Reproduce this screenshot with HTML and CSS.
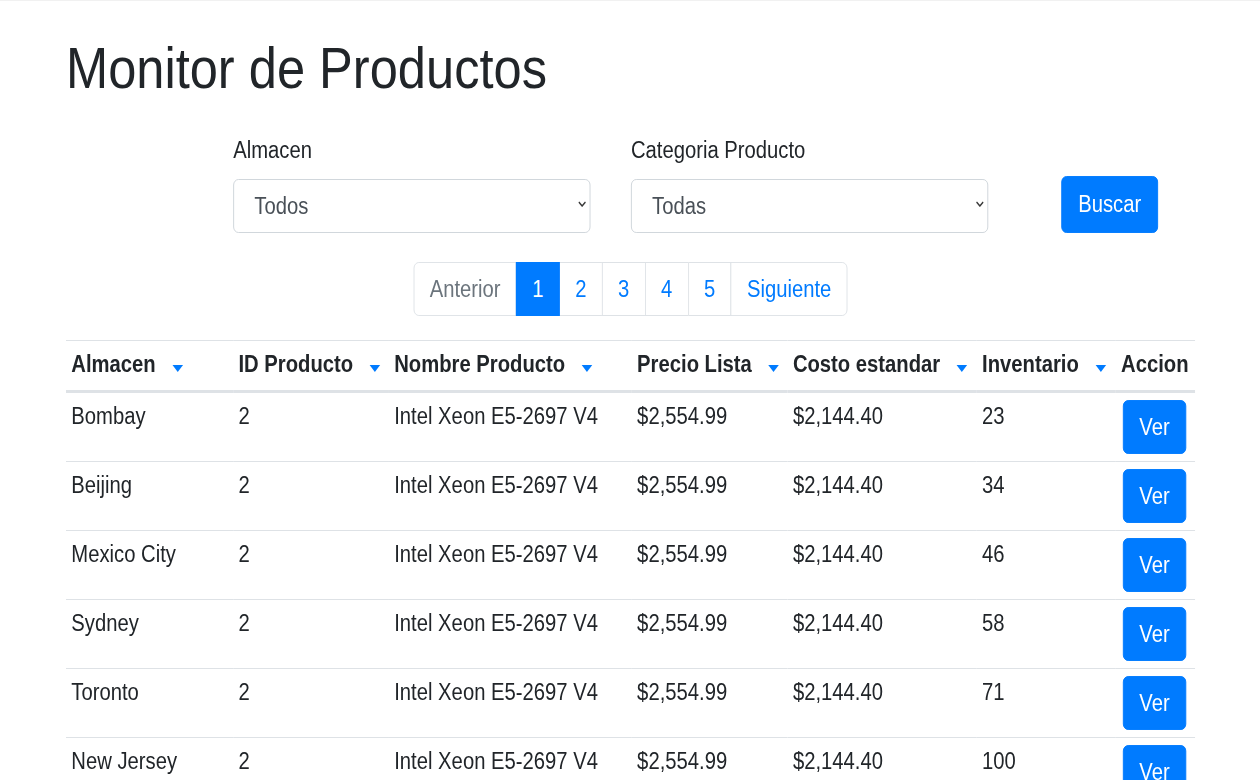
FILE: index.html
```html
<!DOCTYPE html>
<html lang="es">
<head>
<meta charset="utf-8">
<title>Monitor de Productos</title>
<link rel="stylesheet" href="styles.css">
</head>
<body>
<div class="page">
  <div class="container">
    <h1 class="title">Monitor de Productos</h1>

    <form class="filters">
      <div class="field">
        <label class="field-label" for="almacen">Almacen</label>
        <div class="select-wrap">
          <select id="almacen" class="select"><option>Todos</option></select>
          <svg class="chevron" viewBox="0 0 9 7" aria-hidden="true"><polyline points="1.2,1.5 4.5,5 7.8,1.5" fill="none" stroke="#3a3a3a" stroke-width="1.7" stroke-linecap="round" stroke-linejoin="round"/></svg>
        </div>
      </div>
      <div class="field field-second">
        <label class="field-label" for="categoria">Categoria Producto</label>
        <div class="select-wrap">
          <select id="categoria" class="select"><option>Todas</option></select>
          <svg class="chevron" viewBox="0 0 9 7" aria-hidden="true"><polyline points="1.2,1.5 4.5,5 7.8,1.5" fill="none" stroke="#3a3a3a" stroke-width="1.7" stroke-linecap="round" stroke-linejoin="round"/></svg>
        </div>
      </div>
      <button type="button" class="btn btn-search">Buscar</button>
    </form>

    <ul class="pager">
      <li class="pager-item disabled"><span class="pager-link">Anterior</span></li>
      <li class="pager-item active"><span class="pager-link">1</span></li>
      <li class="pager-item"><a class="pager-link" href="#">2</a></li>
      <li class="pager-item"><a class="pager-link" href="#">3</a></li>
      <li class="pager-item"><a class="pager-link" href="#">4</a></li>
      <li class="pager-item"><a class="pager-link" href="#">5</a></li>
      <li class="pager-item"><a class="pager-link" href="#">Siguiente</a></li>
    </ul>

    <table class="table">
      <colgroup>
        <col class="c1"><col class="c2"><col class="c3"><col class="c4"><col class="c5"><col class="c6"><col class="c7">
      </colgroup>
      <thead>
        <tr>
          <th>Almacen<span class="sort"></span></th>
          <th>ID Producto<span class="sort"></span></th>
          <th>Nombre Producto<span class="sort"></span></th>
          <th>Precio Lista<span class="sort"></span></th>
          <th>Costo estandar<span class="sort"></span></th>
          <th>Inventario<span class="sort"></span></th>
          <th>Accion</th>
        </tr>
      </thead>
      <tbody>
        <tr><td>Bombay</td><td>2</td><td>Intel Xeon E5-2697 V4</td><td>$2,554.99</td><td>$2,144.40</td><td>23</td><td><button type="button" class="btn btn-view">Ver</button></td></tr>
        <tr><td>Beijing</td><td>2</td><td>Intel Xeon E5-2697 V4</td><td>$2,554.99</td><td>$2,144.40</td><td>34</td><td><button type="button" class="btn btn-view">Ver</button></td></tr>
        <tr><td>Mexico City</td><td>2</td><td>Intel Xeon E5-2697 V4</td><td>$2,554.99</td><td>$2,144.40</td><td>46</td><td><button type="button" class="btn btn-view">Ver</button></td></tr>
        <tr><td>Sydney</td><td>2</td><td>Intel Xeon E5-2697 V4</td><td>$2,554.99</td><td>$2,144.40</td><td>58</td><td><button type="button" class="btn btn-view">Ver</button></td></tr>
        <tr><td>Toronto</td><td>2</td><td>Intel Xeon E5-2697 V4</td><td>$2,554.99</td><td>$2,144.40</td><td>71</td><td><button type="button" class="btn btn-view">Ver</button></td></tr>
        <tr><td>New Jersey</td><td>2</td><td>Intel Xeon E5-2697 V4</td><td>$2,554.99</td><td>$2,144.40</td><td>100</td><td><button type="button" class="btn btn-view">Ver</button></td></tr>
      </tbody>
    </table>
  </div>
</div>
</body>
</html>
```

FILE: styles.css
```css
html, body {
  margin: 0;
  padding: 0;
  overflow: hidden;
}

body {
  font-family: "Liberation Sans", Arial, sans-serif;
  color: #212529;
  background: #fff;
  border-top: 1px solid #f1f1f1;
}

/* The page is drawn slightly condensed horizontally */
.page {
  width: 1432px;
  margin-right: -172px;
  transform: scaleX(0.88);
  transform-origin: 0 0;
}

.container {
  padding: 0 74px 0 75px;
}

.title {
  margin: 33px 0 0;
  font-size: 57.5px;
  line-height: 68px;
  font-weight: 400;
}

.filters {
  display: flex;
  align-items: flex-end;
  margin-top: 32px;
  padding-left: 190px;
}

.field {
  width: 406px;
  display: flex;
  flex-direction: column;
}

.field-second {
  margin-left: 46px;
}

.field-label {
  font-size: 23px;
  line-height: 32px;
  margin-bottom: 13px;
}

.select-wrap {
  position: relative;
}

.select {
  -webkit-appearance: none;
  appearance: none;
  display: block;
  width: 100%;
  height: 54px;
  box-sizing: border-box;
  margin: 0;
  border: 1px solid #ced4da;
  border-radius: 6px;
  padding: 0 40px 0 23px;
  font: 23px "Liberation Sans", Arial, sans-serif;
  color: #495057;
  background: #fff;
}

.chevron {
  position: absolute;
  right: 5px;
  top: 22px;
  width: 9px;
  height: 7px;
  pointer-events: none;
}

.btn {
  font-family: "Liberation Sans", Arial, sans-serif;
  font-size: 23px;
  color: #fff;
  background: #007bff;
  border: 1px solid #007bff;
  border-radius: 6px;
  padding: 0;
  cursor: pointer;
}

.btn-search {
  margin-left: 83px;
  width: 110px;
  height: 57px;
  line-height: 55px;
}

.pager {
  display: flex;
  justify-content: center;
  list-style: none;
  margin: 29px 0 0;
  padding: 0;
}

.pager-item {
  margin-left: -1px;
}

.pager-item:first-child {
  margin-left: 0;
}

.pager-link {
  display: block;
  padding: 10px 17.5px;
  font-size: 23px;
  line-height: 32px;
  color: #007bff;
  text-decoration: none;
  background: #fff;
  border: 1px solid #dee2e6;
}

.pager-item:first-child .pager-link {
  border-radius: 6px 0 0 6px;
}

.pager-item:last-child .pager-link {
  border-radius: 0 6px 6px 0;
}

.pager-item.disabled .pager-link {
  color: #6c757d;
}

.pager-item.active {
  position: relative;
  z-index: 1;
}

.pager-item.active .pager-link {
  color: #fff;
  background: #007bff;
  border-color: #007bff;
}

.table {
  margin-top: 24px;
  width: 100%;
  border-collapse: separate;
  border-spacing: 0;
  table-layout: fixed;
  font-size: 23px;
  line-height: 32px;
}

.c1 { width: 190px; }
.c2 { width: 177px; }
.c3 { width: 276px; }
.c4 { width: 177px; }
.c5 { width: 215px; }
.c6 { width: 158px; }
.c7 { width: 90px; }

.table th {
  text-align: left;
  font-weight: 700;
  padding: 7px 6px 10px;
  border-top: 1px solid #dee2e6;
  border-bottom: 2px solid #dee2e6;
  white-space: nowrap;
  vertical-align: bottom;
}

.table td {
  padding: 7px 6px;
  border-top: 1px solid #dee2e6;
  vertical-align: top;
  white-space: nowrap;
}

.sort {
  display: inline-block;
  width: 0;
  height: 0;
  margin-left: 19px;
  border-left: 6.5px solid transparent;
  border-right: 6.5px solid transparent;
  border-top: 7px solid #007bff;
}

.btn-view {
  display: block;
  width: 72px;
  height: 54px;
  line-height: 52px;
  margin-left: 2px;
}
```
